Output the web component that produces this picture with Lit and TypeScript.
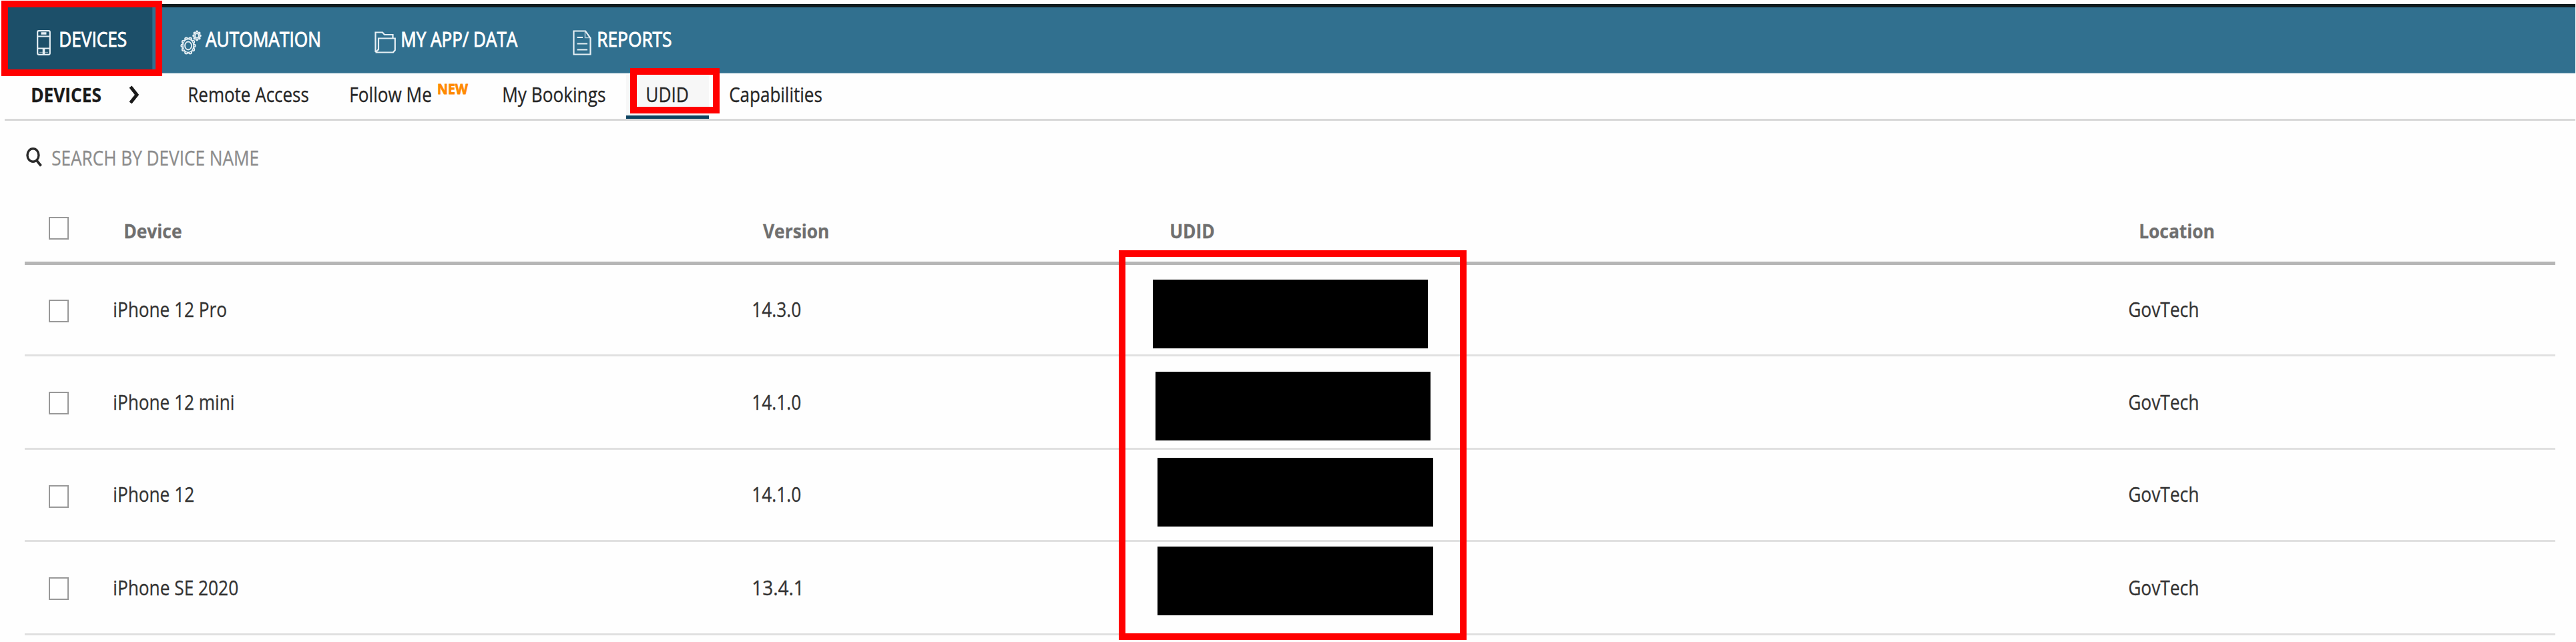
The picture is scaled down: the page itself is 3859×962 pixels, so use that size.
import { LitElement, html, svg, css } from "lit";
import { customElement, property } from "lit/decorators.js";

const pen = document.createElement("canvas").getContext("2d")!;

/** One line of text whose visible glyphs span exactly `w` pixels. */
@customElement("fit-label")
class FitLabel extends LitElement {
  static styles = css`
    :host { display: block; flex: none; white-space: pre; }
    .line { display: inline-block; transform-origin: 0 50%; }
  `;
  @property() text = "";
  @property({ type: Number }) w = 100;

  render() {
    return html`<span class="line">${this.text}</span>`;
  }

  updated() {
    const line = this.renderRoot.querySelector<HTMLElement>(".line")!;
    const cs = getComputedStyle(this);
    pen.font = `${cs.fontWeight} ${cs.fontSize} ${cs.fontFamily}`;
    const m = pen.measureText(this.text);
    const left = -m.actualBoundingBoxLeft;
    const k = this.w / (m.actualBoundingBoxRight - left);
    line.style.transform = `scaleX(${k}) translateX(${-left}px)`;
    this.style.width = `${this.w}px`;
  }
}

const phone = svg`<svg class="ico phone" width="21" height="38" viewBox="0 0 21 38">
  <rect x="1.200" y="1.200" width="18.600" height="35.600" rx="2"/><path d="M1 9.500H20M1 27.500H20"/><path class="bar" d="M6.500 5H14.500M10.500 28V37"/><path class="faint" d="M4 33.500H17"/></svg>`;
const gears = svg`<svg class="ico gears" width="32" height="38" viewBox="0 0 32 38">
  <ellipse class="teeth" pathLength="10" cx="12" cy="23.500" rx="8.600" ry="10.600"/>
  <ellipse class="teeth hollow" pathLength="10" cx="12" cy="23.500" rx="8.600" ry="10.600"/>
  <ellipse class="hub" cx="12" cy="23.500" rx="8" ry="10"/>
  <ellipse cx="12" cy="23.500" rx="5" ry="6"/>
  <ellipse class="teeth small" pathLength="8" cx="25" cy="8.500" rx="4.800" ry="6"/>
  <ellipse class="hub" cx="25" cy="8.500" rx="4.400" ry="5.600"/>
  <ellipse cx="25" cy="8.500" rx="2.800" ry="3.400"/></svg>`;
const folder = svg`<svg class="ico folder" width="32" height="33" viewBox="0 0 32 33">
  <path d="M1.500 31V1.500H12L15 5H27.500V10M2 31L6 27V10.500H30.800V28L28 31.500H1.500"/></svg>`;
const report = svg`<svg class="ico report" width="28" height="38" viewBox="0 0 28 38">
  <path d="M1.500 1.500H19L26.500 12V36.500H1.500ZM6.500 11H15M6.500 20.500H22M6.500 29.500H22"/><path class="fold" d="M18.500 3V11.500H25.500"/></svg>`;

const rows = [
  { name: "iPhone 12 Pro", nw: 168, version: "14.3.0", n: 1 },
  { name: "iPhone 12 mini", nw: 179, version: "14.1.0", n: 2 },
  { name: "iPhone 12", nw: 119, version: "14.1.0", n: 3 },
  { name: "iPhone SE 2020", nw: 185, version: "13.4.1", n: 4 },
];

@customElement("app-root")
class AppRoot extends LitElement {
  static styles = css`
    :host { display: block; position: relative; width: 3859px; height: 962px; overflow: hidden;
      background: #fefefe; font: 400 30.300px/40px "Open Sans", "Noto Sans", sans-serif; color: #2f2f2f; }
    * { box-sizing: border-box; }
    fit-label { -webkit-text-stroke: 0.300px currentColor; }
    .nav { display: flex; height: 104px; margin: 6px 1px 0 7px; border-top: 5px solid #101b1e;
      border-bottom: 1px solid #6f9db5; background: #31708f; color: #fff; }
    .item { display: flex; height: 98px; padding-top: 28px; }
    .item.active { width: 222px; padding-left: 48px; background: #1c4f69; border-right: 1px solid #2b6684; }
    .nav fit-label { -webkit-text-stroke: 0.900px #fff; }
    .ico { display: block; flex: none; fill: none; stroke: #e6eff4; stroke-width: 2.200; margin-top: 6px; }
    .ico .bar { stroke-width: 3.500; }
    .ico .faint { stroke-width: 1.500; opacity: 0.500; }
    .ico .fold { stroke-width: 1.500; opacity: 0.700; }
    .gears { stroke-width: 1.800; }
    .gears .teeth { stroke-width: 6; stroke-linecap: round; stroke-dasharray: 0 1; }
    .gears .hollow { stroke: #31708f; stroke-width: 2.200; }
    .gears .small { stroke-width: 4; }
    .gears .hub { fill: #31708f; stroke-width: 1.400; }
    .phone { margin-right: 13.500px; }
    .gears { margin: 6px 6px 0 41px; }
    .folder { margin: 8px 9px 0 82px; }
    .report { margin: 6px 10px 0 82px; }
    .sub { display: flex; height: 71px; margin: 0 1px 0 7px; padding-left: 41px; border-bottom: 3px solid #d8d8d8; color: #262626; }
    .sub fit-label { margin-top: 12px; }
    .sub .follow { margin-left: 62.500px; }
    .crumb { font-weight: 700; font-size: 29px; color: #1a1a1a; }
    .chev { display: block; margin: 18px 74px 0 42px; }
    .sub .new { font-size: 21.500px; font-weight: 700; color: #ff8a00; margin: 3px 53px 0 10px; -webkit-text-stroke: 0.800px #ff8a00; }
    .tab { width: 124px; height: 68px; margin: 0 31px; padding-left: 31px; border-bottom: 5px solid #0d4461;
      background: linear-gradient(#fefefe 2px, #f7f7f7 2px 62px, #fefefe 62px); }
    .search { display: flex; height: 144px; padding: 36px 0 0 39px; color: #8c8c8c; }
    .search svg { margin: 4px 15px 0 0; }
    .grid { display: grid; grid-template-columns: 36px 97px 959px 624px 1436px 1fr; margin: 0 31px 0 37px; }
    .head { height: 72px; border-bottom: 5px solid #b6b6b6; color: #6f6f6f; font-weight: 700; font-size: 29px; }
    .head fit-label { margin: 1px 0 0 17px; }
    .head .c2 { margin-left: 14px; }
    .head .c3 { margin-left: 0.500px; }
    .row { height: 140px; border-bottom: 3px solid #e0e0e0; color: #333; }
    .r1 { height: 137px; }
    .r3 { height: 138px; }
    .row fit-label { margin: 49px 0 0 1px; }
    .r1 fit-label, .r3 fit-label { margin-top: 47px; }
    .row fit-label.c2 { margin-left: -1px; }
    .row fit-label.c4 { margin-left: 0; }
    .box { grid-column: 2; width: 30px; height: 34px; border: 2px solid #999; background: #fff; margin-top: 53px; }
    .r1 .box { margin-top: 52px; }
    .head .box { margin-top: 0; }
    .mark { position: absolute; border: 10px solid #f00; }
    .m1 { left: 2px; top: 1px; width: 241px; height: 113px; }
    .m2 { left: 944px; top: 102px; width: 134px; height: 68px; }
    .m3 { left: 1676px; top: 375px; width: 521px; height: 584px; }
    .mask { position: absolute; width: 412px; height: 103px; background: #000; }
    .k1 { left: 1727px; top: 419px; }
    .k2 { left: 1731px; top: 557px; }
    .k3 { left: 1734px; top: 686px; width: 413px; }
    .k4 { left: 1734px; top: 819px; width: 413px; }
  `;

  render() {
    return html`
      <div class="nav">
        <div class="item active">${phone}<fit-label text="DEVICES" w="99.5"></fit-label></div>
        <div class="item">${gears}<fit-label text="AUTOMATION" w="170.5"></fit-label></div>
        <div class="item">${folder}<fit-label text="MY APP/ DATA" w="174"></fit-label></div>
        <div class="item">${report}<fit-label text="REPORTS" w="110"></fit-label></div>
      </div>
      <div class="sub">
        <fit-label class="crumb" text="DEVICES" w="103"></fit-label>
        <svg class="chev" width="16" height="28" viewBox="0 0 16 28"><path d="M2.500 2L12 14L2.500 26" fill="none" stroke="#1a1a1a" stroke-width="5"/></svg>
        <fit-label text="Remote Access" w="179.500"></fit-label>
        <fit-label class="follow" text="Follow Me" w="121"></fit-label>
        <fit-label class="new" text="NEW" w="45"></fit-label>
        <fit-label text="My Bookings" w="153"></fit-label>
        <div class="tab"><fit-label text="UDID" w="62"></fit-label></div>
        <fit-label text="Capabilities" w="138.500"></fit-label>
      </div>
      <div class="search">
        <svg width="24" height="29" viewBox="0 0 24 29"><ellipse cx="10.500" cy="11.500" rx="8.500" ry="9.800" fill="none" stroke="#2a2a2a" stroke-width="3.400"/><path d="M16 19.500L22.500 27.500" stroke="#2a2a2a" stroke-width="3.800"/></svg>
        <fit-label text="SEARCH BY DEVICE NAME" w="308.500"></fit-label>
      </div>
      <div class="grid head">
        <div class="box"></div>
        <fit-label text="Device" w="84.500"></fit-label>
        <fit-label class="c2" text="Version" w="97.500"></fit-label>
        <fit-label class="c3" text="UDID" w="64.500"></fit-label>
        <fit-label class="c4" text="Location" w="110"></fit-label>
      </div>
      ${rows.map((r) => html`
        <div class="grid row r${r.n}">
          <div class="box"></div>
          <fit-label text=${r.name} w=${r.nw}></fit-label>
          <fit-label class="c2" text=${r.version} w="71"></fit-label>
          <div></div>
          <fit-label class="c4" text="GovTech" w="104"></fit-label>
        </div>`)}
      ${rows.map((r) => html`<div class="mask k${r.n}"></div>`)}
      <div class="mark m1"></div>
      <div class="mark m2"></div>
      <div class="mark m3"></div>
    `;
  }
}
